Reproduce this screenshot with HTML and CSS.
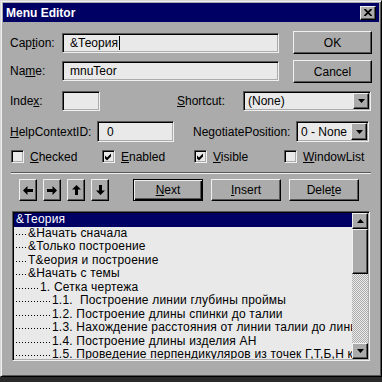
FILE: index.html
```html
<!DOCTYPE html>
<html lang="ru">
<head>
  <meta charset="UTF-8">
  <title>Menu Editor</title>
  <link rel="stylesheet" href="styles.css">
</head>
<body>
  <div class="window">
    <div class="titlebar">
      <span class="title">Menu Editor</span>
      <span class="close-btn">
        <svg width="8" height="7" viewBox="0 0 8 7"><path d="M0.5 0 L7.5 7 M7.5 0 L0.5 7" stroke="#000" stroke-width="1.8"/></svg>
      </span>
    </div>

    <div class="content">
      <div class="top">
        <div class="top-fields">
          <div class="row">
            <span class="lbl lbl-caption">Cap<u>t</u>ion:</span>
            <div class="field field-caption">&amp;Теория<span class="caret"></span></div>
          </div>
          <div class="row">
            <span class="lbl lbl-caption">Na<u>m</u>e:</span>
            <div class="field field-caption">mnuTeor</div>
          </div>
        </div>
        <div class="top-buttons">
          <div class="btn btn-dlg">OK</div>
          <div class="btn btn-dlg">Cancel</div>
        </div>
      </div>

      <div class="row row-index">
        <span class="lbl lbl-caption">Inde<u>x</u>:</span>
        <div class="field field-index"></div>
        <span class="lbl lbl-shortcut"><u>S</u>hortcut:</span>
        <div class="combo combo-shortcut">
          <span class="combo-text">(None)</span>
          <span class="btn combo-btn">
            <svg width="7" height="4" viewBox="0 0 7 4"><polygon points="0,0 7,0 3.5,4" fill="#000"/></svg>
          </span>
        </div>
      </div>

      <div class="row row-help">
        <span class="lbl lbl-help"><u>H</u>elpContextID:</span>
        <div class="field field-help">0</div>
        <span class="lbl lbl-negotiate">Ne<u>g</u>otiatePosition:</span>
        <div class="combo combo-negotiate">
          <span class="combo-text">0 - None</span>
          <span class="btn combo-btn">
            <svg width="7" height="4" viewBox="0 0 7 4"><polygon points="0,0 7,0 3.5,4" fill="#000"/></svg>
          </span>
        </div>
      </div>

      <div class="checks">
        <div class="check"><span class="box"></span><span><u>C</u>hecked</span></div>
        <div class="check">
          <span class="box"><svg width="9" height="9" viewBox="0 0 9 9"><polygon points="1,3.5 3,5.5 7,1.5 7,4.5 3,8.5 1,6.5" fill="#000"/></svg></span>
          <span><u>E</u>nabled</span>
        </div>
        <div class="check">
          <span class="box"><svg width="9" height="9" viewBox="0 0 9 9"><polygon points="1,3.5 3,5.5 7,1.5 7,4.5 3,8.5 1,6.5" fill="#000"/></svg></span>
          <span><u>V</u>isible</span>
        </div>
        <div class="check"><span class="box"></span><span><u>W</u>indowList</span></div>
      </div>

      <div class="separator"></div>

      <div class="tools">
        <div class="btn arrow-btn">
          <svg width="10" height="9" viewBox="0 0 10 9"><path d="M0 4.5 L4.5 0 V3 H10 V6 H4.5 V9 Z" fill="#000"/></svg>
        </div>
        <div class="btn arrow-btn">
          <svg width="10" height="9" viewBox="0 0 10 9"><path d="M10 4.5 L5.5 0 V3 H0 V6 H5.5 V9 Z" fill="#000"/></svg>
        </div>
        <div class="btn arrow-btn">
          <svg width="9" height="10" viewBox="0 0 9 10"><path d="M4.5 0 L9 4.5 H6 V10 H3 V4.5 H0 Z" fill="#000"/></svg>
        </div>
        <div class="btn arrow-btn">
          <svg width="9" height="10" viewBox="0 0 9 10"><path d="M4.5 10 L9 5.5 H6 V0 H3 V5.5 H0 Z" fill="#000"/></svg>
        </div>
        <div class="btn btn-wide btn-default"><u>N</u>ext</div>
        <div class="btn btn-wide"><u>I</u>nsert</div>
        <div class="btn btn-wide">Dele<u>t</u>e</div>
      </div>

      <div class="listbox">
        <div class="list-items">
          <div class="item selected">&amp;Теория</div>
          <div class="item"><span class="dots lvl1"></span>&amp;Начать сначала</div>
          <div class="item"><span class="dots lvl1"></span>&amp;Только построение</div>
          <div class="item"><span class="dots lvl1"></span>Т&amp;еория и построение</div>
          <div class="item"><span class="dots lvl1"></span>&amp;Начать с темы</div>
          <div class="item"><span class="dots lvl2"></span>1. Сетка чертежа</div>
          <div class="item"><span class="dots lvl3"></span>1.1.&nbsp; Построение линии глубины проймы</div>
          <div class="item"><span class="dots lvl3"></span>1.2. Построение длины спинки до талии</div>
          <div class="item"><span class="dots lvl3"></span>1.3. Нахождение расстояния от линии талии до линии бедер</div>
          <div class="item"><span class="dots lvl3"></span>1.4. Построение длины изделия АН</div>
          <div class="item"><span class="dots lvl3"></span>1.5. Проведение перпендикуляров из точек Г,Т,Б,Н к прямой</div>
        </div>
        <div class="scrollbar">
          <div class="btn sb-btn">
            <svg width="7" height="4" viewBox="0 0 7 4"><polygon points="3.5,0 7,4 0,4" fill="#000"/></svg>
          </div>
          <div class="btn sb-thumb"></div>
          <div class="sb-track"></div>
          <div class="btn sb-btn">
            <svg width="7" height="4" viewBox="0 0 7 4"><polygon points="0,0 7,0 3.5,4" fill="#000"/></svg>
          </div>
        </div>
      </div>
    </div>
  </div>
</body>
</html>
```

FILE: styles.css
```css
html,
body {
  margin: 0;
  padding: 0;
  background-color: #2a2a2a;
}

body {
  font-family: "Liberation Sans", Arial, sans-serif;
  font-size: 12px;
  color: #000;
}

.window {
  width: 382px;
  height: 377px;
  box-sizing: border-box;
  background-color: #ababab;
  border: 1px solid;
  border-color: #d8d8d8 #000 #000 #d8d8d8;
  box-shadow: inset 1px 1px #f0f0f0, inset -1px -1px #575757;
  padding: 2px;
}

/* title bar */
.titlebar {
  height: 19px;
  background-color: #000064;
  display: flex;
  align-items: center;
  justify-content: space-between;
  padding: 0 3px;
}

.title {
  color: #fff;
  font-weight: bold;
  font-size: 12px;
}

.close-btn {
  width: 16px;
  height: 14px;
  box-sizing: border-box;
  background-color: #ababab;
  border: 1px solid;
  border-color: #f0f0f0 #000 #000 #f0f0f0;
  box-shadow: inset -1px -1px #575757;
  display: flex;
  align-items: center;
  justify-content: center;
}

.content {
  padding: 0 7px;
}

/* generic 3d pieces */
.btn {
  box-sizing: border-box;
  background-color: #ababab;
  border: 1px solid;
  border-color: #f0f0f0 #000 #000 #f0f0f0;
  box-shadow: inset -1px -1px #575757;
  display: flex;
  align-items: center;
  justify-content: center;
}

.btn-default {
  border-color: #000;
  box-shadow: inset 1px 1px #f0f0f0, inset -1px -1px #000, inset -2px -2px #575757;
}

.field,
.combo {
  box-sizing: border-box;
  background-color: #e9e9e9;
  border: 1px solid;
  border-color: #575757 #f0f0f0 #f0f0f0 #575757;
  box-shadow: inset 1px 1px #000, inset -1px -1px #ababab;
}

.field {
  height: 20px;
  padding-left: 7px;
  display: flex;
  align-items: center;
}

.caret {
  display: inline-block;
  width: 1px;
  height: 14px;
  background-color: #000;
  margin-left: 1px;
}

.row {
  display: flex;
  align-items: center;
}

.lbl {
  flex: none;
}

/* caption / name block */
.top {
  display: flex;
  margin-top: 9px;
}

.top-fields {
  width: 269px;
  padding-top: 2px;
  display: flex;
  flex-direction: column;
  gap: 8px;
}

.lbl-caption {
  width: 52px;
}

.field-caption {
  width: 217px;
}

.top-buttons {
  margin-left: 14px;
  display: flex;
  flex-direction: column;
  gap: 6px;
}

.btn-dlg {
  width: 79px;
  height: 23px;
}

/* index / shortcut */
.row-index {
  margin-top: 8px;
  height: 20px;
}

.field-index {
  width: 38px;
}

.lbl-shortcut {
  margin-left: 77px;
  width: 66px;
}

.combo {
  display: flex;
  padding: 1px;
}

.combo-shortcut {
  width: 128px;
  height: 20px;
}

.combo-text {
  flex: 1;
  padding-left: 3px;
  display: flex;
  align-items: center;
}

.combo-btn {
  width: 16px;
}

/* help id / negotiate */
.row-help {
  margin-top: 10px;
  height: 21px;
}

.lbl-help {
  width: 87px;
}

.field-help {
  width: 77px;
  height: 21px;
  padding-left: 9px;
}

.lbl-negotiate {
  margin-left: 19px;
  width: 103px;
}

.combo-negotiate {
  width: 73px;
  height: 21px;
}

/* checkboxes */
.checks {
  margin-top: 8px;
  padding-left: 1px;
  display: grid;
  grid-template-columns: 91px 92px 90px auto;
}

.check {
  display: flex;
  align-items: center;
  gap: 6px;
  height: 13px;
}

.box {
  width: 13px;
  height: 13px;
  box-sizing: border-box;
  background-color: #e9e9e9;
  border: 1px solid;
  border-color: #575757 #f0f0f0 #f0f0f0 #575757;
  box-shadow: inset 1px 1px #000, inset -1px -1px #ababab;
  padding: 1px;
  display: flex;
}

.separator {
  margin-top: 9px;
  margin-left: 1px;
  width: 360px;
  border-top: 1px solid #575757;
  border-bottom: 1px solid #f0f0f0;
}

/* toolbar row */
.tools {
  display: flex;
  margin-top: 5px;
  height: 22px;
  gap: 6px;
}

.arrow-btn {
  width: 18px;
}

.arrow-btn:first-child {
  margin-left: 9px;
}

.btn-wide {
  width: 70px;
  margin-left: 2px;
}

.btn-default {
  margin-left: 18px;
}

/* list of menu items */
.listbox {
  margin-top: 10px;
  margin-left: 2px;
  width: 358px;
  height: 150px;
  box-sizing: border-box;
  background-color: #e9e9e9;
  border: 1px solid;
  border-color: #575757 #f0f0f0 #f0f0f0 #575757;
  box-shadow: inset 1px 1px #000, inset -1px -1px #ababab;
  padding: 1px;
  display: flex;
}

.list-items {
  flex: 1;
  overflow: hidden;
}

.item {
  height: 13.5px;
  line-height: 13.5px;
  padding-left: 2px;
  white-space: nowrap;
  letter-spacing: 0.2px;
}

.item.selected {
  background-color: #000064;
  color: #fff;
}

.dots {
  display: inline-block;
  height: 1px;
  vertical-align: 2px;
  background-image: repeating-linear-gradient(90deg, #000 0 1px, transparent 1px 3px);
}

.lvl1 { width: 12px; }
.lvl2 { width: 24px; }
.lvl3 { width: 36px; }

.scrollbar {
  width: 16px;
  display: flex;
  flex-direction: column;
}

.sb-btn {
  height: 16px;
  flex: none;
}

.sb-thumb {
  height: 45px;
  flex: none;
}

.sb-track {
  flex: 1;
  background-image: repeating-conic-gradient(#ececec 0 25%, #ababab 0 50%);
  background-size: 2px 2px;
}
```
